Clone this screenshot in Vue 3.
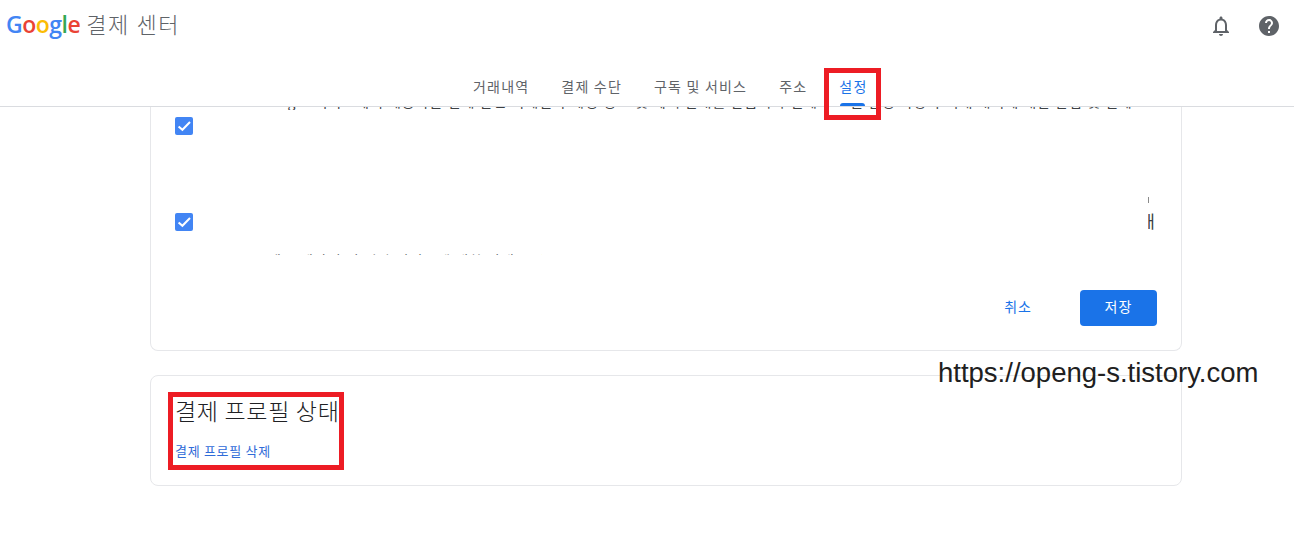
<script setup>
const tabs = [
  { label: '거래내역' },
  { label: '결제 수단' },
  { label: '구독 및 서비스' },
  { label: '주소' },
  { label: '설정', active: true }
]
const logo = [
  { ch: 'G', color: '#4285f4' },
  { ch: 'o', color: '#ea4335' },
  { ch: 'o', color: '#fbbc05' },
  { ch: 'g', color: '#4285f4' },
  { ch: 'l', color: '#34a853' },
  { ch: 'e', color: '#ea4335' }
]
</script>

<template>
  <div class="page">
    <header class="header">
      <div class="top">
        <div class="brand">
          <span class="logo"><span v-for="(l, i) in logo" :key="i" :style="{ color: l.color }">{{ l.ch }}</span></span>
          <span class="title">결제 센터</span>
        </div>
        <div class="actions">
          <svg class="icon" viewBox="0 0 24 24" aria-hidden="true">
            <path fill="#5f6368" d="M12 22c1.1 0 2-.9 2-2h-4c0 1.1.9 2 2 2zm6-6v-5c0-3.07-1.63-5.64-4.5-6.32V4c0-.83-.67-1.5-1.5-1.5s-1.5.67-1.5 1.5v.68C7.64 5.36 6 7.92 6 11v5l-2 2v1h16v-1l-2-2zm-2 1H8v-6c0-2.48 1.51-4.5 4-4.5s4 2.02 4 4.5v6z"/>
          </svg>
          <svg class="icon" viewBox="0 0 24 24" aria-hidden="true">
            <path fill="#5f6368" d="M12 2C6.48 2 2 6.48 2 12s4.48 10 10 10 10-4.48 10-10S17.52 2 12 2zm1 17h-2v-2h2v2zm2.07-7.75l-.9.92C13.45 12.9 13 13.5 13 15h-2v-.5c0-1.1.45-2.1 1.17-2.83l1.24-1.26c.37-.36.59-.86.59-1.41 0-1.1-.9-2-2-2s-2 .9-2 2H8c0-2.21 1.79-4 4-4s4 1.79 4 4c0 .88-.36 1.68-.93 2.25z"/>
          </svg>
        </div>
      </div>
      <nav class="tabs">
        <a v-for="t in tabs" :key="t.label" class="tab" :class="{ active: t.active }">{{ t.label }}</a>
      </nav>
      <div class="mark mark-tab"></div>
    </header>

    <main class="main">
      <section class="card card-settings">
        <p class="clip clip-top"><span>Google 서비스에서 제공하는 결제 관련 이메일과 계정 정보 및 혜택 안내를 받습니다 결제 프로필 변경 사항과 거래 내역에 대한 알림 및 결제 프로필 관련 안내</span></p>
        <div class="check first"><svg viewBox="0 0 18 18" aria-hidden="true"><path d="M3.6 9.4l3.8 3.4L15 5" fill="none" stroke="#fff" stroke-width="2"/></svg></div>
        <div class="check second"><svg viewBox="0 0 18 18" aria-hidden="true"><path d="M3.6 9.4l3.8 3.4L15 5" fill="none" stroke="#fff" stroke-width="2"/></svg></div>
        <p class="clip clip-low"><span>세금 계산서 및 기타 서비스에 대한 안내를 받을 수 있습니다 있습니다</span></p>
        <div class="buttons">
          <a class="cancel">취소</a>
          <button class="save" type="button">저장</button>
        </div>
        <i class="tick"></i>
        <span class="stray">개</span>
      </section>

      <section class="card card-status">
        <h2 class="status-title">결제 프로필 상태</h2>
        <a class="delete-link">결제 프로필 삭제</a>
        <div class="mark mark-status"></div>
      </section>
    </main>

    <div class="watermark">https://openg-s.tistory.com</div>
  </div>
</template>

<style>
html, body { background: #fff; }
</style>

<style scoped>
.page {
  position: relative;
  width: 1294px;
  height: 543px;
  overflow: hidden;
  background: #fff;
  font-family: "Roboto", "Noto Sans CJK KR", sans-serif;
  color: #202124;
}

.header {
  position: relative;
  z-index: 2;
  height: 107px;
  box-sizing: border-box;
  border-bottom: 1px solid #dadce0;
  background: #fff;
}

.top {
  display: flex;
  justify-content: space-between;
  height: 68px;
  padding: 3px 13px 0 6px;
  box-sizing: border-box;
}

.brand {
  display: flex;
  align-items: baseline;
  height: 40px;
  gap: 6px;
}

.logo {
  font-family: "Open Sans", sans-serif;
  font-size: 23px;
  font-weight: 600;
  line-height: 40px;
  letter-spacing: -0.5px;
}

.title {
  font-family: "Noto Sans CJK KR", sans-serif;
  font-size: 22px;
  font-weight: 300;
  line-height: 40px;
  letter-spacing: 1.6px;
  color: #5f6368;
}

.actions {
  display: flex;
  gap: 24px;
  padding-top: 11px;
}

.icon {
  width: 24px;
  height: 24px;
}

.tabs {
  display: flex;
  padding-left: 457px;
  height: 38px;
}

.tab {
  position: relative;
  padding: 7px 16px 0;
  font-family: "Noto Sans CJK KR", sans-serif;
  font-size: 14px;
  line-height: 22px;
  letter-spacing: 1.2px;
  color: #5f6368;
  white-space: nowrap;
}

.tab.active {
  color: #1a73e8;
}

.tab.active::after {
  content: "";
  position: absolute;
  left: 17px;
  right: 18px;
  bottom: 0;
  height: 3px;
  border-radius: 3px 3px 0 0;
  background: #1a73e8;
}

.mark {
  position: absolute;
  box-sizing: border-box;
  border: 5px solid #ed1c24;
  pointer-events: none;
}

.mark-tab {
  left: 824px;
  top: 68px;
  width: 57px;
  height: 52px;
  z-index: 3;
}

.main {
  width: 1032px;
  margin-left: 150px;
  display: flex;
  flex-direction: column;
  gap: 24px;
}

.card {
  position: relative;
  box-sizing: border-box;
  border: 1px solid #e6e7ea;
  border-radius: 8px;
  background: #fff;
}

.card-settings {
  height: 244px;
  border-top: 0;
  border-top-left-radius: 0;
  border-top-right-radius: 0;
}

.clip {
  position: absolute;
  margin: 0;
  overflow: hidden;
  font-family: "Noto Sans CJK KR", sans-serif;
  font-size: 14px;
  line-height: 20px;
  letter-spacing: 1px;
  white-space: nowrap;
  color: #3c4043;
}

.clip span {
  display: block;
}

.clip-top {
  left: 107px;
  top: 0;
  width: 880px;
  height: 3px;
}

.clip-top span {
  margin-top: -16px;
}

.clip-low {
  left: 117px;
  top: 145px;
  width: 274px;
  height: 3px;
}

.clip-low span {
  margin-top: -2px;
}

.check {
  position: absolute;
  left: 24px;
  width: 18px;
  height: 18px;
  border-radius: 2px;
  background: #4285f4;
}

.check svg {
  display: block;
}

.check.first { top: 10px; }
.check.second { top: 106px; }

.buttons {
  position: absolute;
  right: 24px;
  bottom: 24px;
  display: flex;
  align-items: center;
  gap: 48px;
}

.cancel {
  padding-bottom: 5px;
  font-family: "Noto Sans CJK KR", sans-serif;
  font-size: 14px;
  letter-spacing: 1px;
  color: #1a73e8;
}

.save {
  width: 77px;
  height: 36px;
  padding: 0 0 4px;
  border: 0;
  border-radius: 4px;
  background: #1a73e8;
  color: #fff;
  font-family: "Noto Sans CJK KR", sans-serif;
  font-size: 14px;
  letter-spacing: 1px;
}

.tick {
  position: absolute;
  left: 997px;
  top: 90px;
  height: 6px;
  border-left: 1px dashed #8a8a8a;
}

.stray {
  position: absolute;
  left: 997px;
  top: 103px;
  width: 7px;
  overflow: hidden;
  font-family: "Noto Sans CJK KR", sans-serif;
  font-size: 17px;
  line-height: 22px;
  direction: rtl;
  color: #3c4043;
}

.card-status {
  height: 111px;
  padding: 18px 24px 0;
}

.status-title {
  margin: 0 0 16px;
  font-family: "Noto Sans CJK KR", sans-serif;
  font-size: 23px;
  font-weight: 300;
  line-height: 32px;
  letter-spacing: 0.7px;
  color: #202124;
}

.delete-link {
  display: block;
  font-family: "Noto Sans CJK KR", sans-serif;
  font-size: 13px;
  line-height: 18px;
  letter-spacing: 0.7px;
  color: #2f6bd8;
}

.mark-status {
  left: 17px;
  top: 16px;
  width: 176px;
  height: 78px;
}

.watermark {
  position: absolute;
  z-index: 4;
  left: 938px;
  top: 356px;
  font-family: "Liberation Sans", Arial, sans-serif;
  font-size: 27.5px;
  line-height: 34px;
  color: #202020;
  white-space: nowrap;
}
</style>
